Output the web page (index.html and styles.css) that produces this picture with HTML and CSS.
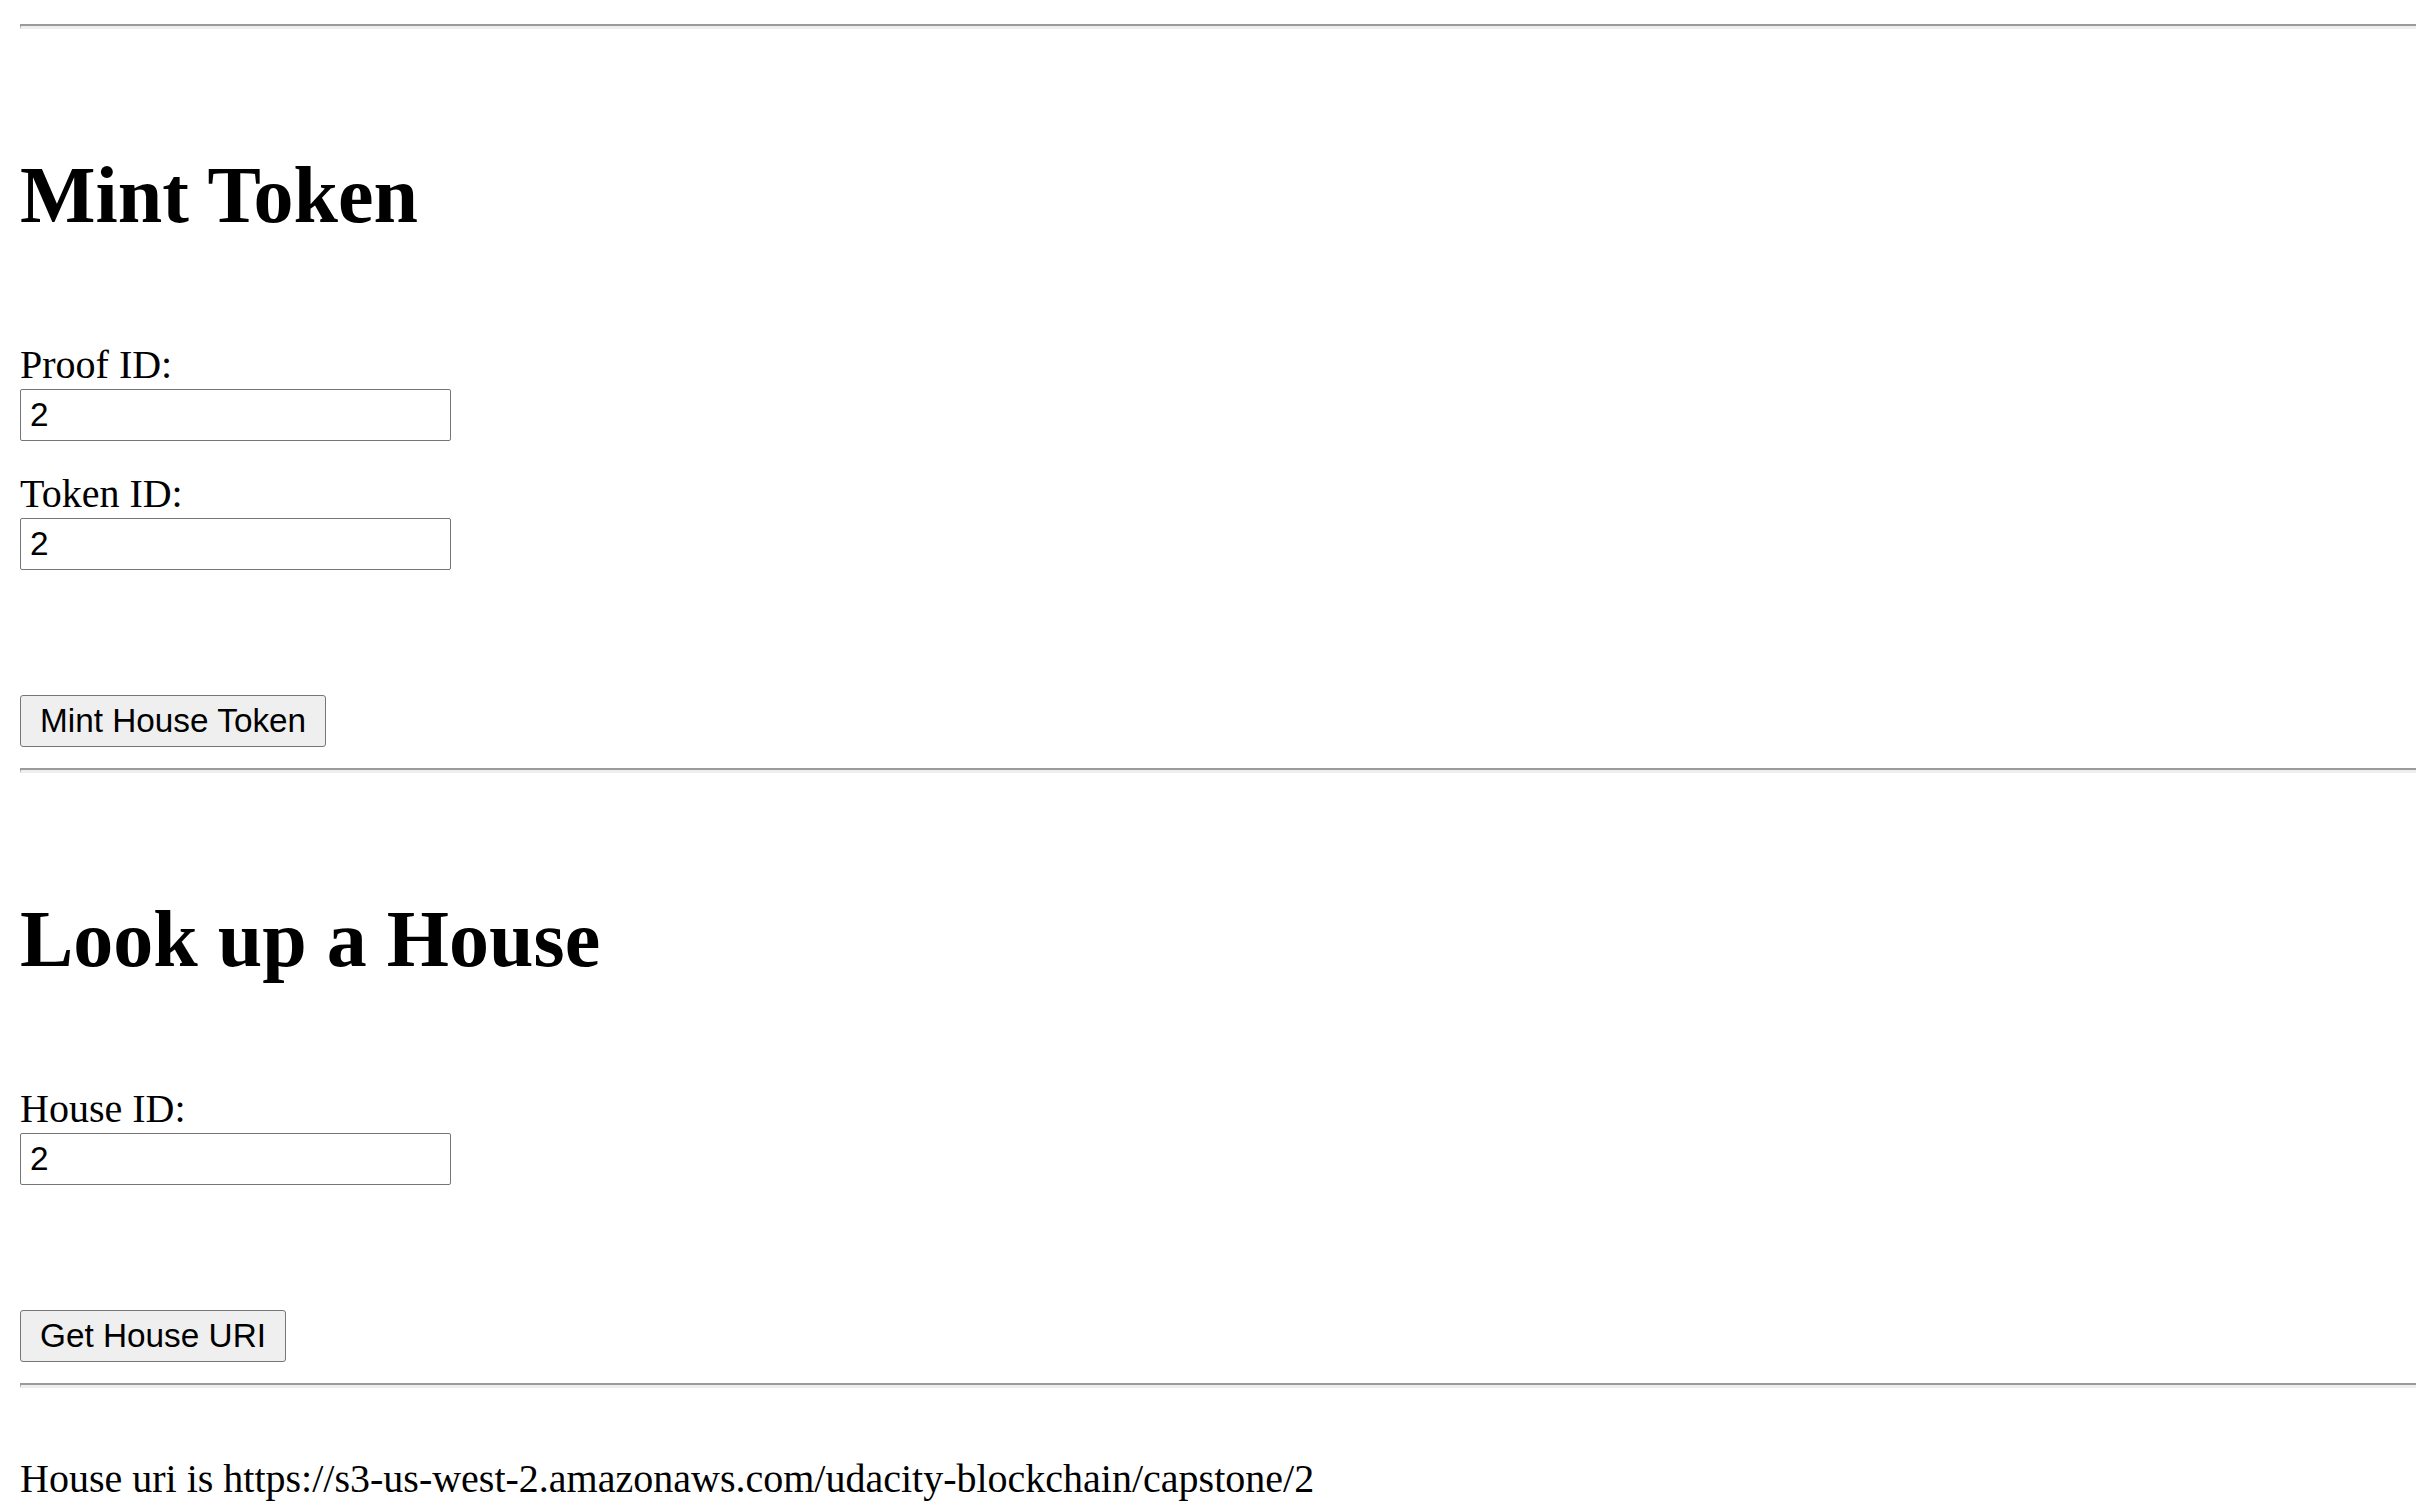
FILE: index.html
```html
<!DOCTYPE html>
<html lang="en">
<head>
<meta charset="utf-8">
<title>House Token</title>
<link rel="stylesheet" href="styles.css">
</head>
<body>
<hr class="divider">
<section class="panel">
  <h1 class="panel-title">Mint Token</h1>
  <div class="field">
    <label class="field-label" for="proof-id">Proof ID:</label>
    <input class="field-input" id="proof-id" type="text" value="2">
  </div>
  <div class="field">
    <label class="field-label" for="token-id">Token ID:</label>
    <input class="field-input" id="token-id" type="text" value="2">
  </div>
  <button class="action" type="button">Mint House Token</button>
</section>
<hr class="divider">
<section class="panel">
  <h1 class="panel-title">Look up a House</h1>
  <div class="field">
    <label class="field-label" for="house-id">House ID:</label>
    <input class="field-input" id="house-id" type="text" value="2">
  </div>
  <button class="action" type="button">Get House URI</button>
</section>
<hr class="divider">
<p class="result">House uri is https://s3-us-west-2.amazonaws.com/udacity-blockchain/capstone/2</p>
</body>
</html>
```

FILE: styles.css
```css
html {
  background: #ffffff;
}

body {
  margin: 0;
  padding: 24px 0 0 20px;
  font-family: "Liberation Serif", "Times New Roman", serif;
  font-size: 40px;
  line-height: 46px;
  color: #000000;
  background: #ffffff;
}

.divider {
  height: 0;
  margin: 0;
  border: 0;
  border-top: 2px solid #9a9a9a;
  border-left: 1px solid #9a9a9a;
  border-bottom: 3px solid #eeeeee;
}

.panel {
  display: flex;
  flex-direction: column;
  align-items: flex-start;
  padding: 120px 0 21px;
}

.panel-title {
  margin: 0 0 101px;
  font-size: 80px;
  line-height: 92px;
  font-weight: bold;
}

.field {
  display: flex;
  flex-direction: column;
  align-items: flex-start;
  gap: 1px;
}

.field + .field {
  margin-top: 30px;
}

.field-label {
  line-height: 46px;
}

.field-input {
  box-sizing: border-box;
  width: 431px;
  height: 52px;
  margin: 0;
  padding: 0 9px;
  border: 1px solid #767676;
  border-radius: 2px;
  background: #ffffff;
  color: #000000;
  font-family: "Liberation Sans", Arial, sans-serif;
  font-size: 33.33px;
}

.action {
  box-sizing: border-box;
  height: 52px;
  margin: 125px 0 0;
  padding: 0 19px;
  border: 1px solid #767676;
  border-radius: 3px;
  background: #efefef;
  color: #000000;
  font-family: "Liberation Sans", Arial, sans-serif;
  font-size: 33.33px;
}

.result {
  margin: 68px 0 0;
  line-height: 46px;
}
```
